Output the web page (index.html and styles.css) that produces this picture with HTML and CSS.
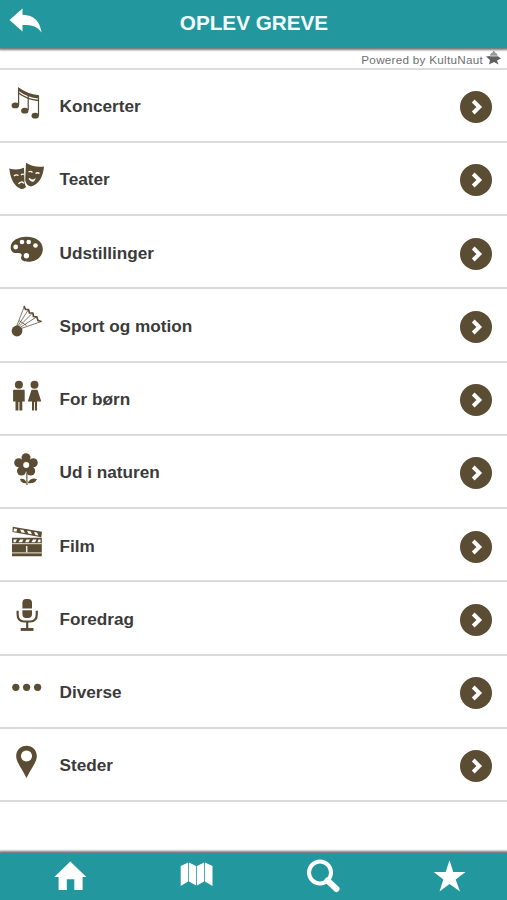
FILE: index.html
```html
<!DOCTYPE html>
<html lang="da">
<head>
<meta charset="utf-8">
<title>Oplev Greve</title>
<link rel="stylesheet" href="styles.css">
</head>
<body>
<svg width="0" height="0" class="defs">
  <symbol id="go" viewBox="0 0 32 32"><circle cx="16" cy="16" r="16" fill="#5b4c34"/><path d="M13.200 10 19.300 16 13.200 22" fill="none" stroke="#fff" stroke-width="3.900"/></symbol>
</svg>
<header class="top">
  <a class="back"><svg width="34" height="26" viewBox="0 0 34 26"><path d="M0.500 12 13.500 0.500V6.700C25 7 31 13 32.500 24.500C28.500 18.500 23.500 17 13.500 17V23.500Z"/></svg></a>
  <h1>OPLEV GREVE</h1>
</header>
<div class="powered">
  <span>Powered by KultuNaut</span>
  <svg width="15" height="14" viewBox="0 0 15 14"><path d="M4 5Q4 2 6.500 1.500L7 0h1.500l.4 1.500Q11.500 2 11.500 5z" fill="#999"/><path d="M0 5.500 4 5H11.500L15 7.500 11 9.500 12.500 13.500 8 11 3 13.500 4 9z" fill="#606060"/><path d="M4 5h7.500" stroke="#ccc"/></svg>
</div>
<main class="list">
  <a class="row">
    <svg class="icon" viewBox="0 0 52 71"><path d="M18.600 35V18M38.500 26V45.500M28.200 40V24" fill="none" stroke="#5b4c34" stroke-width="1.200"/><path d="M18 17Q27 24 39 25.200V28.500Q27 27.500 18 20.500z"/><path d="M18.500 23Q27 29.500 38.500 30.500" fill="none" stroke="#5b4c34" stroke-width="1.500"/><ellipse cx="15.300" cy="35.400" rx="3.700" ry="2.900"/><ellipse cx="24.800" cy="40.700" rx="3.700" ry="2.900"/><ellipse cx="35.200" cy="45.700" rx="3.700" ry="2.900"/></svg>
    <span>Koncerter</span><svg class="go"><use href="#go"/></svg>
  </a>
  <a class="row">
    <svg class="icon" viewBox="0 0 52 71"><path d="M9.300 25.500Q17 28 24 24.800L24.500 40 26 44Q24 46.500 21 46 11 42 9.300 25.500z"/><path d="M26 19.800Q34 25 44 23.500 42.500 40 31 43.500 26 42.500 25.200 37z"/><path d="M14 33q2-2 4.500-.5M21 32q1.500-1.500 3-.5M18.500 41q2.500-3.500 5.500-.8M28.500 29q2-1.500 4 .5M35.500 30.500q2-1.500 4 0M29 35.500q3 2.500 5.500 1-1.500 3.500-5.500-1" fill="none" stroke="#fff" stroke-width="1.300"/></svg>
    <span>Teater</span><svg class="go"><use href="#go"/></svg>
  </a>
  <a class="row">
    <svg class="icon" viewBox="0 0 52 71"><path d="M26 20.700C36 20.500 42.800 25.500 42.800 33 42.800 41 36 45.800 28 45.800 22 45.800 20 43 21.500 40 22.500 37.500 20 36.500 17 37 12.500 37.500 10.500 34.500 10.700 31 11 24.500 18 20.900 26 20.700z"/><g fill="#fff"><circle cx="15.700" cy="31" r="2.400"/><circle cx="22" cy="26" r="2.300"/><circle cx="28.700" cy="26" r="2.300"/><circle cx="35.500" cy="29.500" r="2.300"/><circle cx="26.400" cy="39.800" r="2.700"/></g></svg>
    <span>Udstillinger</span><svg class="go"><use href="#go"/></svg>
  </a>
  <a class="row">
    <svg class="icon" viewBox="0 0 52 71"><path d="M16.500 37.500 24.300 17.500M17.500 37.500 28.500 20.500M18.500 38 32.500 24M20 38.500 36.500 28M21 39.500 41.500 32.500M19 31.500 26.500 36.500" fill="none" stroke="#5b4c34" stroke-width=".75"/><path d="M24 17 25.500 20.500 28.500 20.500 29.500 24 32.800 24 33.500 27.500 36.800 27.800 38 31.500 41.500 32.500" fill="none" stroke="#5b4c34" stroke-width="1.700"/><circle cx="17" cy="42" r="5.400"/><path d="M16.500 36 22.500 40 21 43z"/></svg>
    <span>Sport og motion</span><svg class="go"><use href="#go"/></svg>
  </a>
  <a class="row">
    <svg class="icon" viewBox="0 0 52 71"><circle cx="18.900" cy="21.800" r="4"/><circle cx="34.500" cy="21.800" r="4"/><path d="M14 26.800H24Q24.700 26.800 24.700 27.500V38.500H22.300V47.500H19.400V39H18.400V47.500H15.500V38.500H13.100V27.500Q13.100 26.800 14 26.800z"/><path d="M31.500 26.800H37.500L41.300 38.500H37V47.500H34.900V39H34V47.500H32V38.500H27.800z"/></svg>
    <span>For børn</span><svg class="go"><use href="#go"/></svg>
  </a>
  <a class="row">
    <svg class="icon" viewBox="0 0 52 71"><circle cx="26" cy="21.700" r="4.500"/><circle cx="33.300" cy="26.800" r="4.500"/><circle cx="30.700" cy="35" r="4.500"/><circle cx="21.500" cy="35" r="4.500"/><circle cx="18.700" cy="26.800" r="4.500"/><circle cx="26" cy="29" r="6.500"/><circle cx="26.200" cy="28.900" r="3" fill="#fff"/><path d="M26.800 37 27 49" stroke="#5b4c34" stroke-width="1.100"/><path d="M20 43Q25 41.800 26.700 47.200 21.500 48 20 43zM37 43Q30.500 41 27.700 47 34.500 48.500 37 43z"/></svg>
    <span>Ud i naturen</span><svg class="go"><use href="#go"/></svg>
  </a>
  <a class="row">
    <svg class="icon" viewBox="0 0 52 71"><path d="M12.700 17.700 42 22.700 41.300 28.200 12.500 23zM12 28.800H41.800V47.300H12z"/><path d="M14 19.500l3 .5-.5 2.700-3-.5zM20 20.500l3.500.6 1.500 3-3.500-.6zM27 21.700l3.500.6 1.500 3-3.500-.6zM34 22.900l3 .5 1.500 3-3-.5zM13.500 30.500h3.500l-1.500 2.800h-2zM20 30.500h3.500L22 33.300h-3.500zM26.500 30.500H30l-1.500 2.800H25zM33 30.500h3.500L35 33.300h-3.500zM38.500 30.500h2v2.800h-3z" fill="#fff"/><path d="M12 34.700H41.800M12 43.900H41.800" stroke="#eee9df" stroke-width="1"/><path d="M26.700 37V43.500" stroke="#eee9df" stroke-width="1.500"/></svg>
    <span>Film</span><svg class="go"><use href="#go"/></svg>
  </a>
  <a class="row">
    <svg class="icon" viewBox="0 0 52 71"><path d="M22.400 26.500V20.700Q22.400 16.900 26 16.900H28.200Q32 16.900 32 20.700V26.500zM22.400 28.200H32V32Q32 36 28.200 36H26Q22.400 36 22.400 32z"/><path d="M17.600 28.700V32Q17.600 39.500 24 39.500H30.300Q36.800 39.500 36.800 32V28.700M27.200 39.500V47" fill="none" stroke="#5b4c34" stroke-width="2.200"/><path d="M20.700 46H33.500V48.900H20.700z"/></svg>
    <span>Foredrag</span><svg class="go"><use href="#go"/></svg>
  </a>
  <a class="row">
    <svg class="icon" viewBox="0 0 52 71"><circle cx="15.800" cy="31.300" r="3.600"/><circle cx="26.600" cy="31.300" r="3.600"/><circle cx="37.600" cy="31.300" r="3.600"/></svg>
    <span>Diverse</span><svg class="go"><use href="#go"/></svg>
  </a>
  <a class="row">
    <svg class="icon" viewBox="0 0 52 71"><path fill-rule="evenodd" d="M26.500 16.700C32.500 16.700 36.800 21 36.800 27 36.800 33 32 38 26.500 49 21 38 16.200 33 16.200 27 16.200 21 20.500 16.700 26.500 16.700zM26.500 21.500a5.500 5.500 0 1 0 .01 0z"/></svg>
    <span>Steder</span><svg class="go"><use href="#go"/></svg>
  </a>
</main>
<nav class="bottom">
  <a><svg viewBox="0 0 34 34"><path d="M17.300 2.500 33.300 18H29.600V31H21.300V20.300H13.800V31H5.600V18H1.300z"/></svg></a>
  <a><svg viewBox="0 0 34 34"><path d="M.7 7 8.100 3.500V22.500L.7 27zM8.900 3.500 16.100 7V26.500L8.900 22.500zM16.900 7 24.100 3.500V22.500L16.900 26.500zM24.900 3.500 32.500 7V27L24.900 22.500z"/></svg></a>
  <a><svg viewBox="0 0 34 34"><circle cx="14" cy="13.500" r="11" fill="none" stroke="#fff" stroke-width="4"/><path d="M21.500 21.500 30.500 30" stroke="#fff" stroke-width="6" stroke-linecap="round"/></svg></a>
  <a><svg viewBox="0 0 34 34"><path d="M17.500 1.300 21.300 13H33.500L23.700 20.400 28 32.500 17.500 25 7.500 32.500 11.300 20.400 1.800 13H13.700z"/></svg></a>
</nav>
</body>
</html>
```
FILE: styles.css
```css
* { box-sizing: border-box; }
body {
  margin: 0;
  height: 900px;
  display: flex;
  flex-direction: column;
  overflow: hidden;
  background: #fff;
  font-family: "Liberation Sans", Arial, sans-serif;
  color: #3b3b3b;
}
.defs { position: absolute; }
svg { display: block; }
.top {
  flex: none;
  height: 48px;
  display: grid;
  grid-template-columns: 60px 1fr 60px;
  align-items: center;
  background: #22979e;
  box-shadow: 0 1px 2px 1px #777;
}
.top h1 {
  margin: 0;
  padding: 0 0 2px 1px;
  text-align: center;
  font-size: 20.7px;
  line-height: 24px;
  color: #f2ffff;
}
.back { padding: 0 0 6px 9px; }
.back svg, .bottom svg { fill: #fff; }
.powered {
  flex: none;
  height: 21.5px;
  display: flex;
  justify-content: flex-end;
  align-items: center;
  gap: 3px;
  padding: 4px 6px 0 0;
  border-bottom: 2px solid #dcdcdc;
  font-size: 11.7px;
  letter-spacing: .27px;
  color: #707070;
}
.powered svg { margin-top: -4px; }
.list { flex: 1; }
.row {
  height: 73.25px;
  display: flex;
  align-items: center;
  border-bottom: 2px solid #dadada;
  font-size: 17.2px;
  font-weight: bold;
}
.row span { flex: 1; padding: 3px 0 0 7.5px; }
.icon { width: 52px; height: 71px; fill: #5b4c34; }
.go { width: 32px; height: 32px; margin: 4px 15px 0 0; }
.bottom {
  flex: none;
  height: 47px;
  display: grid;
  grid-template-columns: repeat(4, 126.4px);
  padding-left: 7px;
  background: #22979e;
  box-shadow: 0 -1px 2px 1px #777;
}
.bottom a { display: flex; justify-content: center; padding-top: 6px; }
.bottom svg { width: 34px; height: 34px; }
```
